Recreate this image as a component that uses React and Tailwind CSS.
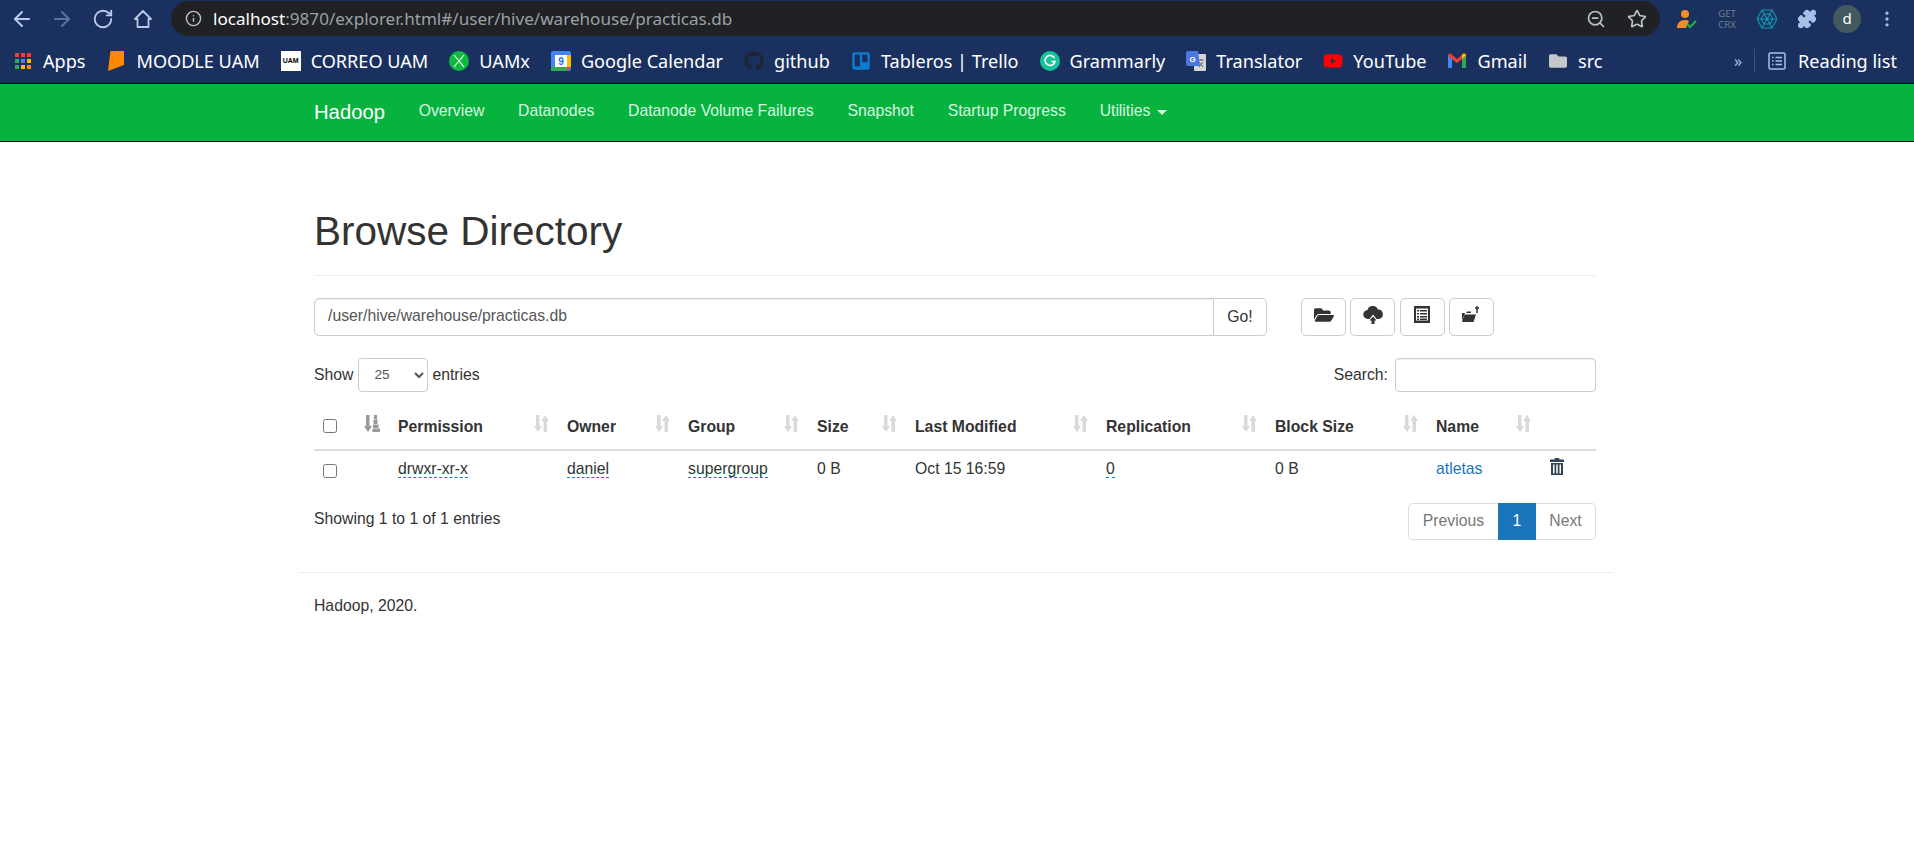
import React from "react";
import { ArrowLeft, ArrowRight, RotateCw, Info, ZoomOut, Star, MoreVertical, Puzzle } from "lucide-react";
import { FaGithub, FaFolderOpen, FaFolder, FaTrello, FaYoutube } from "react-icons/fa";

const uiFont = "font-['Noto_Sans',sans-serif]";

function AppsIcon() {
  const colors = ["#ea4335", "#ea4335", "#ea4335", "#34a853", "#4285f4", "#fbbc04", "#34a853", "#fbbc04", "#fb8c00"];
  return (
    <div className="grid grid-cols-3 gap-[2px] w-[16px] h-[16px]">
      {colors.map((c, i) => (
        <div key={i} style={{ background: c }} />
      ))}
    </div>
  );
}

function HomeIcon() {
  return (
    <svg width="20" height="20" viewBox="0 0 20 20" fill="none" stroke="#b9cbe8" strokeWidth="1.8">
      <path d="M10 2 2 10h2.500v8h11v-8H18z" strokeLinejoin="round" />
    </svg>
  );
}

function MoodleIcon() {
  return (
    <svg width="16" height="20" viewBox="0 0 16 20">
      <path d="M2.500 0H16v14L0 20z" fill="#ff8800" />
    </svg>
  );
}

function CorreoIcon() {
  return (
    <div className="w-[20px] h-[20px] bg-white flex items-center justify-center text-[7px] font-bold text-black font-['Liberation_Sans',sans-serif]">
      UAM
    </div>
  );
}

function UamxIcon() {
  return (
    <svg width="20" height="20" viewBox="0 0 20 20">
      <circle cx="10" cy="10" r="10" fill="#10b93f" />
      <path d="M5 4l10 12M15 4L5 16" stroke="#fff" strokeWidth="1.100" />
    </svg>
  );
}

function CalendarIcon() {
  return (
    <svg width="20" height="20" viewBox="0 0 20 20">
      <rect x="0" y="0" width="20" height="20" rx="2" fill="#4285f4" />
      <rect x="4" y="4" width="12" height="12" fill="#fff" />
      <rect x="16" y="4" width="4" height="12" fill="#fbbc04" />
      <rect x="0" y="16" width="16" height="4" fill="#34a853" />
      <path d="M16 16h4l-4 4z" fill="#ea4335" />
      <text x="10" y="14" textAnchor="middle" fontSize="10" fontWeight="700" fill="#1a73e8" fontFamily="Liberation Sans">9</text>
    </svg>
  );
}

function GrammarlyIcon() {
  return (
    <svg width="20" height="20" viewBox="0 0 20 20">
      <circle cx="10" cy="10" r="10" fill="#15c39a" />
      <path d="M14.500 7A5 5 0 1 0 15 10.500h-3.500" fill="none" stroke="#fff" strokeWidth="1.600" />
    </svg>
  );
}

function TranslateIcon() {
  return (
    <svg width="20" height="20" viewBox="0 0 20 20">
      <rect x="8" y="3" width="12" height="17" rx="1" fill="#d5d5d5" />
      <path d="M12 9h6M15 8v2M13 16l4-5M13 11l4 5" stroke="#666" strokeWidth="1" />
      <path d="M2 0h10l2 15H2a2 2 0 0 1-2-2V2a2 2 0 0 1 2-2z" fill="#4a76e0" />
      <text x="6.500" y="11" textAnchor="middle" fontSize="8" fontWeight="700" fill="#fff" fontFamily="Liberation Sans">G</text>
    </svg>
  );
}

function GmailIcon() {
  return (
    <svg width="18" height="16" viewBox="0 0 18 16">
      <path d="M0 2v12a1 1 0 0 0 1 1h3V6z" fill="#4285f4" />
      <path d="M18 2v12a1 1 0 0 1-1 1h-3V6z" fill="#34a853" />
      <path d="M0 2.500C0 .8 2 0 3 1l6 5 6-5c1-1 3-.2 3 1.500L14 6 9 10 4 6z" fill="#ea4335" />
      <path d="M14 1.800 15 1c1-1 3-.2 3 1.500L14 6z" fill="#fbbc04" />
    </svg>
  );
}

function ReadingIcon() {
  return (
    <svg width="18" height="18" viewBox="0 0 18 18" fill="none" stroke="#a8c0e8" strokeWidth="1.500">
      <rect x="1" y="1" width="16" height="16" rx="1.500" />
      <path d="M4 5.500h1.500M4 9h1.500M4 12.500h1.500M7.500 5.500H14M7.500 9H14M7.500 12.500H14" />
    </svg>
  );
}

function CrxIcon() {
  return (
    <div className="text-[9.500px] leading-[11px] text-center text-[#6f7f93] font-['Noto_Sans',sans-serif]">
      GET
      <br />
      CRX
    </div>
  );
}

function WebIcon() {
  return (
    <svg width="20" height="20" viewBox="0 0 20 20" fill="none" stroke="#0e9bb0" strokeWidth="1.100">
      <path d="M5 1h10l5 9-5 9H5l-5-9z" />
      <path d="M7 5h6l3 5-3 5H7l-3-5zM5 1l5 9 5-9M0 10h20M5 19l5-9 5 9" />
    </svg>
  );
}

function PersonIcon() {
  return (
    <svg width="20" height="20" viewBox="0 0 20 20">
      <circle cx="8" cy="5" r="4" fill="#f28c28" />
      <path d="M0 19c0-5 3-8 8-8 2 0 3 .5 4 1l-3 7z" fill="#f28c28" />
      <path d="M10 15l3 3 6-6" stroke="#22b04b" strokeWidth="2" fill="none" />
    </svg>
  );
}

// sort arrows in the table head, glyphicon style
function SortIcon() {
  return (
    <svg width="15" height="17" viewBox="0 0 15 17" fill="#d9d9d9">
      <path d="M2 0h3.500v11H8l-4 6-4-6h2z" />
      <path d="M9.500 17H13V6h2l-4-6-4 6h2.500z" />
    </svg>
  );
}

function SortActiveIcon() {
  return (
    <svg width="16" height="17" viewBox="0 0 16 17" fill="#999">
      <path d="M2 0h3.500v11H8l-4 6-4-6h2z" />
      <path d="M10 0h3v4h-3zM9.500 4.500h4V9h-4zM9 9.500h5.500V13H9zM8.500 13.500H16V17H8.500z" />
    </svg>
  );
}

function CloudUploadIcon() {
  return (
    <svg width="20" height="18" viewBox="0 0 20 18" fill="#333">
      <path d="M5 13a4.500 4.500 0 0 1-.5-9A5.500 5.500 0 0 1 15 3.500a4.800 4.800 0 0 1 1 9.500h-2.500L10 8.500 6.500 13z" />
      <path d="M10 10.500 13.500 14.500H11.500V18h-3v-3.500h-2z" />
    </svg>
  );
}

function ListIcon() {
  return (
    <svg width="16" height="17" viewBox="0 0 16 17">
      <path d="M0 0h16v17H0z" fill="#333" />
      <path d="M2 2.500h12v12H2z" fill="#fff" />
      <path d="M3 4h2v1.500H3zM6 4h7v1.500H6zM3 7h2v1.500H3zM6 7h7v1.500H6zM3 10h2v1.500H3zM6 10h7v1.500H6zM3 12.500h2V14H3zM6 12.500h7V14H6z" fill="#333" />
    </svg>
  );
}

function NewFolderIcon() {
  return (
    <svg width="18" height="17" viewBox="0 0 18 17">
      <path d="M0 7h4l1-1.500h4V7h-6L0 15z" fill="#333" />
      <path d="M2.500 8.500H14L11.500 16H0z" fill="#333" />
      <path d="M15 0v7M13 2h4" stroke="#333" strokeWidth="1.500" />
    </svg>
  );
}

function TrashIcon() {
  return (
    <svg width="14" height="17" viewBox="0 0 14 17" fill="#2f4454">
      <path d="M5 0h4l.5 1.500H14V4H0V1.500h4.500z" />
      <path d="M1 5h12v12H1zM3 6.500V15.500h1.500V6.500zM6.250 6.500V15.500h1.500V6.500zM9.500 6.500V15.500H11V6.500z" fillRule="evenodd" />
    </svg>
  );
}

function Bookmark({ icon, label }) {
  return (
    <div className="flex items-center gap-[10px] shrink-0">
      <div className="w-[20px] flex justify-center">{icon}</div>
      <span>{label}</span>
    </div>
  );
}

function ExtCell({ children }) {
  return <div className="w-[40px] flex items-center justify-center">{children}</div>;
}

function BrowserChrome() {
  return (
    <div className={`bg-[#1a3160] h-[84px] border-b border-black ${uiFont}`}>
      <div className="h-[40px] flex items-center pl-[10px] pr-[7px] pb-[3px]">
        <ArrowLeft size={24} className="text-[#b9cbe8]" />
        <ArrowRight size={24} className="text-[#5d7399] ml-[16px]" />
        <RotateCw size={22} className="text-[#b9cbe8] ml-[18px]" />
        <div className="ml-[19px]"><HomeIcon /></div>
        <div className="ml-[18px] flex-1 h-[35px] bg-[#202124] rounded-full flex items-center pl-[14px] pr-[13px]">
          <Info size={17} className="text-[#bdc1c6]" />
          <div className="ml-[11px] text-[17.100px] text-[#9aa0a6]">
            <span className="text-white">localhost</span>:9870/explorer.html#/user/hive/warehouse/practicas.db
          </div>
          <ZoomOut size={20} className="ml-auto text-[#bdc1c6]" />
          <Star size={20} className="ml-[21px] text-[#bdc1c6]" />
        </div>
        <div className="ml-[7px] flex items-center">
          <ExtCell><PersonIcon /></ExtCell>
          <ExtCell><CrxIcon /></ExtCell>
          <ExtCell><WebIcon /></ExtCell>
          <ExtCell><Puzzle size={20} fill="#a8c0e8" className="text-[#a8c0e8]" /></ExtCell>
          <ExtCell>
            <div className="w-[28px] h-[28px] rounded-full bg-[#41595f] text-white text-[15px] flex items-center justify-center">
              d
            </div>
          </ExtCell>
          <ExtCell><MoreVertical size={20} className="text-[#a8c0e8]" /></ExtCell>
        </div>
      </div>
      <div className="h-[43px] flex items-center pl-[15px] pr-[17px] gap-[21px] text-[18.100px] text-white">
        <div className="flex items-center gap-[12px] shrink-0">
          <AppsIcon />
          <span>Apps</span>
        </div>
        <Bookmark icon={<MoodleIcon />} label="MOODLE UAM" />
        <Bookmark icon={<CorreoIcon />} label="CORREO UAM" />
        <Bookmark icon={<UamxIcon />} label="UAMx" />
        <Bookmark icon={<CalendarIcon />} label="Google Calendar" />
        <Bookmark icon={<FaGithub size={20} className="text-[#1d2433]" />} label="github" />
        <Bookmark icon={<FaTrello size={20} className="text-[#0c7cd0]" />} label="Tableros | Trello" />
        <Bookmark icon={<GrammarlyIcon />} label="Grammarly" />
        <Bookmark icon={<TranslateIcon />} label="Translator" />
        <Bookmark icon={<FaYoutube size={22} className="text-[#ff0000]" />} label="YouTube" />
        <Bookmark icon={<GmailIcon />} label="Gmail" />
        <Bookmark icon={<FaFolder size={18} className="text-[#c4c7cc]" />} label="src" />
        <div className="ml-auto flex items-center shrink-0">
          <span className="text-[#a8c0e8] text-[16px] mr-[12px]">»</span>
          <div className="w-px h-[24px] bg-[#3b5280] mr-[13px]" />
          <ReadingIcon />
          <span className="ml-[12px]">Reading list</span>
        </div>
      </div>
    </div>
  );
}

function NavBar() {
  const links = ["Overview", "Datanodes", "Datanode Volume Failures", "Snapshot", "Startup Progress"];
  return (
    <div className="bg-[#06b33e] h-[58px] border-b border-black pl-[314px] flex items-center gap-[33.750px] text-[15.750px] text-[#dcf5e0] pb-[1px]">
      <span className="text-[20.250px] text-white">Hadoop</span>
      {links.map((l) => (
        <a key={l} className="mt-[-2px]">{l}</a>
      ))}
      <a className="mt-[-2px] flex items-center gap-[7px]">
        Utilities
        <span className="w-0 h-0 mt-[2px] border-x-[5px] border-x-transparent border-t-[5px] border-t-[#dcf5e0]" />
      </a>
    </div>
  );
}

function HeadCell({ label, active, className }) {
  return (
    <th className={`relative h-[46px] pb-[10px] pl-[8px] align-bottom text-left font-bold ${className || ""}`}>
      {label}
      <span className="absolute right-[10px] top-[11px]">
        {active ? <SortActiveIcon /> : <SortIcon />}
      </span>
    </th>
  );
}

function Editable({ children }) {
  return <span className="border-b border-dashed border-[#0088cc]">{children}</span>;
}

function FileTable() {
  return (
    <table className="w-full table-fixed border-collapse mt-[12px]">
      <colgroup>
        <col className="w-[42px]" />
        <col className="w-[34px]" />
        <col className="w-[169px]" />
        <col className="w-[121px]" />
        <col className="w-[129px]" />
        <col className="w-[98px]" />
        <col className="w-[191px]" />
        <col className="w-[169px]" />
        <col className="w-[161px]" />
        <col className="w-[113px]" />
        <col className="w-[55px]" />
      </colgroup>
      <thead className="border-b-2 border-[#ddd]">
        <tr>
          <th className="pl-[9px] pb-[16px] align-bottom text-left">
            <input type="checkbox" className="block w-[14px] h-[14px]" />
          </th>
          <HeadCell active />
          <HeadCell label="Permission" />
          <HeadCell label="Owner" />
          <HeadCell label="Group" />
          <HeadCell label="Size" />
          <HeadCell label="Last Modified" />
          <HeadCell label="Replication" />
          <HeadCell label="Block Size" />
          <HeadCell label="Name" />
          <th />
        </tr>
      </thead>
      <tbody>
        <tr className="h-[44px]">
          <td className="pl-[9px]">
            <input type="checkbox" className="block w-[14px] h-[14px] mb-[3px]" />
          </td>
          <td />
          <td className="pl-[8px] pb-[7px]"><Editable>drwxr-xr-x</Editable></td>
          <td className="pl-[8px] pb-[7px]"><Editable>daniel</Editable></td>
          <td className="pl-[8px] pb-[7px]"><Editable>supergroup</Editable></td>
          <td className="pl-[8px] pb-[7px]">0 B</td>
          <td className="pl-[8px] pb-[7px]">Oct 15 16:59</td>
          <td className="pl-[8px] pb-[7px]"><Editable>0</Editable></td>
          <td className="pl-[8px] pb-[7px]">0 B</td>
          <td className="pl-[8px] pb-[7px] text-[#1a75bb]">atletas</td>
          <td className="pl-[9px] pb-[11px]">
            <TrashIcon />
          </td>
        </tr>
      </tbody>
    </table>
  );
}

function ToolButton({ children }) {
  return (
    <button className="w-[45px] h-[38px] border border-[#ccc] rounded-[5px] bg-white flex items-center justify-center pb-[4px]">
      {children}
    </button>
  );
}

export default function App() {
  return (
    <div className="min-h-[854px] bg-white text-[#333] text-[15.750px] font-['Liberation_Sans',Arial,sans-serif]">
      <BrowserChrome />
      <NavBar />
      <div className="w-[1314px] ml-[298px] px-[16px]">
        <h1 className="text-[40.500px] leading-[44.500px] pt-[67px] pb-[21px] border-b border-[#eee]">
          Browse Directory
        </h1>
        <div className="flex items-center mt-[22px]">
          <div className="flex w-[953px] h-[38px]">
            <div className="flex-1 border border-[#ccc] rounded-l-[5px] pl-[13px] pb-[1px] flex items-center text-[#555] shadow-[inset_0_1px_1px_rgba(0,0,0,0.075)]">
              /user/hive/warehouse/practicas.db
            </div>
            <button className="w-[53px] border border-l-0 border-[#ccc] rounded-r-[5px] bg-white">Go!</button>
          </div>
          <div className="flex gap-[4.300px] ml-[34px]">
            <ToolButton><FaFolderOpen size={20} className="text-[#333]" /></ToolButton>
            <ToolButton><CloudUploadIcon /></ToolButton>
            <ToolButton><ListIcon /></ToolButton>
            <ToolButton><NewFolderIcon /></ToolButton>
          </div>
        </div>
        <div className="flex items-center justify-between mt-[22px] h-[34px]">
          <div className="flex items-center">
            Show
            <select
              defaultValue="25"
              className="w-[70px] h-[34px] ml-[5px] mr-[4px] pl-[11px] border border-[#ccc] rounded-[4px] bg-white text-[13.500px] text-[#555]"
            >
              <option>10</option>
              <option>25</option>
              <option>50</option>
              <option>100</option>
            </select>
            entries
          </div>
          <div className="flex items-center gap-[7px]">
            Search:
            <input className="w-[201px] h-[34px] border border-[#ccc] rounded-[4px] shadow-[inset_0_1px_1px_rgba(0,0,0,0.075)]" />
          </div>
        </div>
        <FileTable />
        <div className="flex items-center justify-between mt-[9px]">
          <span className="mt-[-5px]">Showing 1 to 1 of 1 entries</span>
          <div className="flex h-[37px] items-stretch text-[#777]">
            <a className="w-[90px] border border-r-0 border-[#ddd] rounded-l-[5px] flex items-center justify-center">Previous</a>
            <a className="w-[38px] bg-[#1a75bb] text-white flex items-center justify-center">1</a>
            <a className="w-[60px] border border-l-0 border-[#ddd] rounded-r-[5px] flex items-center justify-center">Next</a>
          </div>
        </div>
      </div>
      <div className="w-[1316px] ml-[298px] mt-[32px] border-t border-[#eee] pl-[16px] pt-[21px]">
        Hadoop, 2020.
      </div>
    </div>
  );
}
